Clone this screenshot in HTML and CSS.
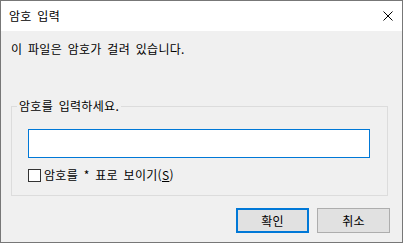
FILE: index.html
```html
<!DOCTYPE html>
<html lang="ko">
<head>
  <meta charset="UTF-8" />
  <meta name="viewport" content="width=device-width, initial-scale=1.0"/>
  <title>암호 입력</title>
  <link rel="stylesheet" href="styles.css">
</head>
<body>
  <div class="dialog">
    <div class="title-bar">
      <span class="title">암호 입력</span>
      <span class="close-btn">
        <svg width="10" height="10" viewBox="0 0 10 10">
          <path d="M0.5 0.5 L9.5 9.5 M9.5 0.5 L0.5 9.5" stroke="#000" stroke-width="1" fill="none"/>
        </svg>
      </span>
    </div>
    <div class="dialog-body">
      <p class="message">이 파일은 암호가 걸려 있습니다.</p>
      <fieldset class="group-box">
        <legend>암호를 입력하세요.</legend>
        <div class="group-content">
          <input type="password" class="password-input" />
          <label class="check-row">
            <input type="checkbox" class="check-box" />
            <span>암호를 * 표로 보이기(<u>S</u>)</span>
          </label>
        </div>
      </fieldset>
      <div class="button-row">
        <button class="btn btn-default">확인</button>
        <button class="btn">취소</button>
      </div>
    </div>
  </div>
</body>
</html>
```

FILE: styles.css
```css
body {
  margin: 0;
  padding: 0;
  font-family: 'Noto Sans CJK KR', 'Liberation Sans', sans-serif;
  font-size: 12px;
  word-spacing: 2px;
  letter-spacing: 0.3px;
  color: #000;
}

.dialog {
  width: 403px;
  height: 243px;
  box-sizing: border-box;
  border: 1px solid #777;
  display: flex;
  flex-direction: column;
  background-color: #f0f0f0;
}

.title-bar {
  height: 30px;
  background-color: #fff;
  display: flex;
  align-items: center;
  justify-content: space-between;
  padding: 0 9px 0 8px;
  flex-shrink: 0;
}

.title {
  line-height: 16px;
}

.close-btn {
  display: flex;
  margin-top: -1px;
}

.dialog-body {
  flex: 1;
  display: flex;
  flex-direction: column;
  padding: 10px 12px 9px 10px;
}

.message {
  margin: 0;
  line-height: 16px;
}

.group-box {
  margin: 41px 2px 0 0;
  padding: 0;
  border: 1px solid #dcdcdc;
  min-width: 0;
}

.group-box legend {
  margin-left: 5px;
  padding: 0 2px;
  line-height: 16px;
}

.group-content {
  padding: 15px 17px 12px 16px;
}

.password-input {
  display: block;
  width: 342px;
  height: 29px;
  box-sizing: border-box;
  margin: 0;
  border: 1px solid #0078d7;
  background: #fff;
  outline: none;
}

.check-row {
  display: flex;
  align-items: center;
  gap: 3px;
  margin-top: 9px;
  line-height: 16px;
}

.check-box {
  appearance: none;
  -webkit-appearance: none;
  width: 13px;
  height: 13px;
  margin: 0;
  border: 1px solid #333;
  background: #fff;
  box-sizing: border-box;
}

.button-row {
  display: flex;
  justify-content: flex-end;
  gap: 8px;
  margin-top: 12px;
}

.btn {
  width: 73px;
  height: 25px;
  box-sizing: border-box;
  font-family: inherit;
  font-size: 12px;
  letter-spacing: 0.3px;
  background-color: #e1e1e1;
  border: 1px solid #adadad;
  padding: 0;
  color: #000;
}

.btn-default {
  border: 2px solid #0078d7;
}
```
